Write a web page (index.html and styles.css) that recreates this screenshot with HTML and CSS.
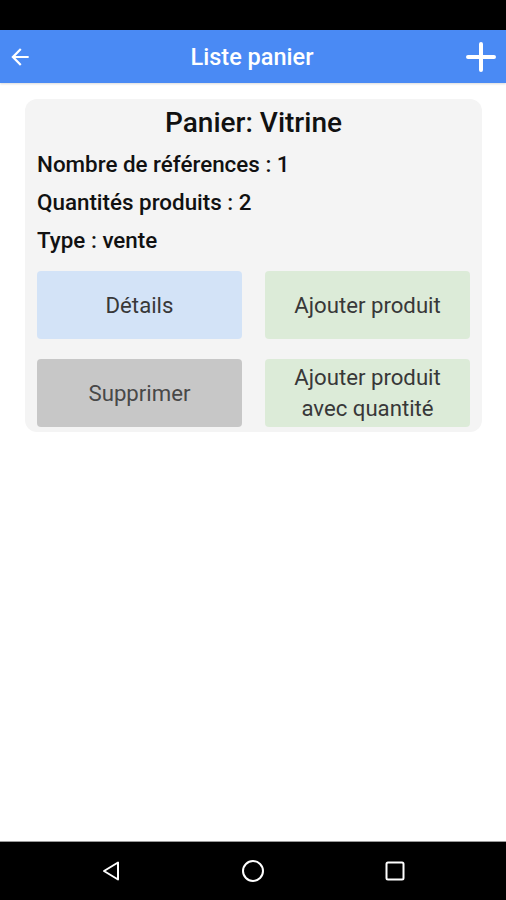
FILE: index.html
```html
<!DOCTYPE html>
<html lang="fr">
<head>
    <meta charset="UTF-8" />
    <meta name="viewport" content="width=device-width, initial-scale=1.0" />
    <title>Liste panier</title>
    <link rel="stylesheet" href="styles.css">
</head>
<body>
    <div id="statusBar"></div>

    <div id="appBar">
        <span class="barIcon">
            <svg width="26" height="26" viewBox="0 0 24 24"><path d="M20 11H7.83l5.59-5.59L12 4l-8 8 8 8 1.41-1.41L7.83 13H20v-2z" fill="#fff"/></svg>
        </span>
        <h1>Liste panier</h1>
        <span class="barIcon">
            <svg width="32" height="32" viewBox="0 0 32 32"><path d="M16 3v26M3 16h26" stroke="#fff" stroke-width="4" stroke-linecap="round"/></svg>
        </span>
    </div>

    <div id="content">
        <div class="basketCard">
            <h2>Panier: Vitrine</h2>
            <p>Nombre de références : 1</p>
            <p>Quantités produits : 2</p>
            <p>Type : vente</p>
            <div class="actions">
                <button class="btnDetails">Détails</button>
                <button class="btnAdd">Ajouter produit</button>
                <button class="btnDelete">Supprimer</button>
                <button class="btnAdd">Ajouter produit<br />avec quantité</button>
            </div>
        </div>
    </div>

    <div id="navBar">
        <svg width="24" height="24" viewBox="0 0 24 24"><path d="M19 3.5v17L5 12z" fill="none" stroke="#fff" stroke-width="2" stroke-linejoin="round"/></svg>
        <svg width="24" height="24" viewBox="0 0 24 24"><circle cx="12" cy="12" r="10" fill="none" stroke="#fff" stroke-width="2"/></svg>
        <svg width="24" height="24" viewBox="0 0 24 24"><rect x="3.5" y="3.5" width="17" height="17" rx="1.5" fill="none" stroke="#fff" stroke-width="2"/></svg>
    </div>
</body>
</html>
```

FILE: styles.css
```css
body {
  font-family: Roboto, "Noto Sans", Arial, sans-serif;
  margin: 0;
  height: 900px;
  display: flex;
  flex-direction: column;
  background-color: #fff;
}

#statusBar {
  height: 30px;
  background-color: #000;
}

#appBar {
  height: 53px;
  background-color: #4a8af4;
  display: flex;
  align-items: center;
  justify-content: space-between;
  padding: 0 9px 0 7px;
  box-shadow: 0 1px 2px rgba(0, 0, 0, 0.15);
}

#appBar h1 {
  margin: 0;
  color: #fff;
  font-size: 23.5px;
  font-weight: 500;
}

.barIcon {
  display: flex;
  width: 32px;
  align-items: center;
}

#content {
  flex: 1;
  padding: 16px 24px 0 25px;
}

.basketCard {
  background-color: #f4f4f4;
  border-radius: 12px;
  padding: 8px 12px 5px 12px;
}

.basketCard h2 {
  margin: 0 0 13px;
  text-align: center;
  font-size: 28px;
  line-height: 32px;
  font-weight: 500;
  color: #111;
}

.basketCard p {
  margin: 0 0 14px;
  font-size: 22.4px;
  font-weight: 500;
  color: #111;
  line-height: 24px;
}

.actions {
  display: grid;
  grid-template-columns: 1fr 1fr;
  column-gap: 23px;
  row-gap: 20px;
  margin-top: 19px;
}

button {
  height: 68px;
  border: none;
  border-radius: 4px;
  font-family: inherit;
  font-size: 22.2px;
  color: #383838;
  line-height: 31px;
  padding: 0;
}

.btnDetails {
  background-color: #d3e3f7;
}

.btnAdd {
  background-color: #dcebd8;
}

.btnDelete {
  background-color: #c7c7c7;
  color: #484848;
}

#navBar {
  height: 58px;
  background-color: #000;
  border-top: 1px solid #9a9a9a;
  display: flex;
  align-items: center;
  justify-content: center;
  gap: 118px;
}
```
